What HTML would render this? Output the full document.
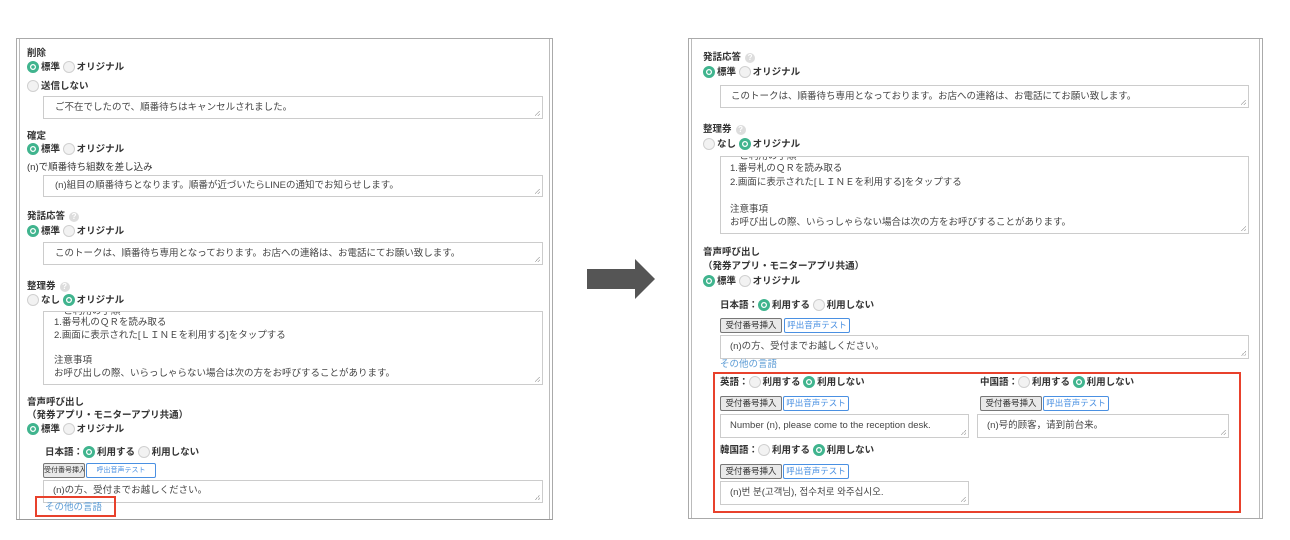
<!DOCTYPE html>
<html><head><meta charset="utf-8"><style>
body{margin:0;width:1290px;height:540px;background:#fff;position:relative;overflow:hidden;font-family:"Liberation Sans","Noto Sans CJK JP",sans-serif;color:#333}
.a{position:absolute}
.t{position:absolute;font-size:9.5px;line-height:12px;white-space:nowrap}
.b{font-weight:bold}
.r{display:inline-block;width:10px;height:10px;border-radius:50%;border:1px solid #d0d0d0;background:#f2f2f2;vertical-align:-3px;margin-right:2px}
.r.on{width:6px;height:6px;border:3px solid #40b48e;background:radial-gradient(circle,#40b48e 0 1.5px,#fff 2px)}
.ta{position:absolute;border:1px solid #ccc;background:#fff;overflow:hidden}
.ta:after{content:"";position:absolute;right:2px;bottom:2px;width:5px;height:5px;background:linear-gradient(135deg,transparent 45%,#aaa 45%,#aaa 55%,transparent 55%,transparent 75%,#aaa 75%,#aaa 85%,transparent 85%)}
.ta .t{color:#444}
.btn{position:absolute;font-size:8.5px;line-height:13px;height:13px;border:1px solid #777;border-radius:2px;background:#e9e9e9;color:#333;text-align:center;white-space:nowrap;overflow:hidden}
.sm{font-size:7px}
.btn2{border-color:#4a90e2;background:#fff;color:#4a90e2}
.q{display:inline-block;width:10px;height:10px;border-radius:50%;background:#ddd;color:#fff;font-size:8px;line-height:10px;text-align:center;vertical-align:0;margin-left:4px}
.link{color:#5b9bd5}
.red{position:absolute;border:2px solid #e8412c}
</style></head><body>
<div class="a" style="left:16px;top:38px;width:535px;height:480px;border:1px solid #aaa;border-bottom:1px solid #999"></div>
<div class="a" style="left:19px;top:39px;width:529px;height:480px;border-left:1px solid #bbb;border-right:1px solid #bbb"></div>

<div class="t b" style="left:27px;top:48px">削除</div>
<div class="t b" style="left:27px;top:61px"><span class="r on"></span>標準 <span class="r"></span>オリジナル</div>
<div class="t b" style="left:27px;top:80px"><span class="r"></span>送信しない</div>
<div class="ta" style="left:43px;top:96px;width:498px;height:21px"><div class="t" style="left:11px;top:5px">ご不在でしたので、順番待ちはキャンセルされました。</div></div>

<div class="t b" style="left:27px;top:131px">確定</div>
<div class="t b" style="left:27px;top:143px"><span class="r on"></span>標準 <span class="r"></span>オリジナル</div>
<div class="t" style="left:27px;top:162px">(n)で順番待ち組数を差し込み</div>
<div class="ta" style="left:43px;top:175px;width:498px;height:20px"><div class="t" style="left:11px;top:4px">(n)組目の順番待ちとなります。順番が近づいたらLINEの通知でお知らせします。</div></div>

<div class="t b" style="left:27px;top:211px">発話応答<span class="q">?</span></div>
<div class="t b" style="left:27px;top:225px"><span class="r on"></span>標準 <span class="r"></span>オリジナル</div>
<div class="ta" style="left:43px;top:242px;width:498px;height:21px"><div class="t" style="left:11px;top:5px">このトークは、順番待ち専用となっております。お店への連絡は、お電話にてお願い致します。</div></div>

<div class="t b" style="left:27px;top:281px">整理券<span class="q">?</span></div>
<div class="t b" style="left:27px;top:294px"><span class="r"></span>なし <span class="r on"></span>オリジナル</div>
<div class="ta" style="left:43px;top:311px;width:498px;height:72px">
<div class="t" style="left:10px;top:-6px">・ご利用の手順</div>
<div class="t" style="left:10px;top:5px">1.番号札のＱＲを読み取る</div>
<div class="t" style="left:10px;top:18px">2.画面に表示された[ＬＩＮＥを利用する]をタップする</div>
<div class="t" style="left:10px;top:43px">注意事項</div>
<div class="t" style="left:10px;top:56px">お呼び出しの際、いらっしゃらない場合は次の方をお呼びすることがあります。</div></div>

<div class="t b" style="left:27px;top:397px">音声呼び出し</div>
<div class="t b" style="left:27px;top:410px">（発券アプリ・モニターアプリ共通）</div>
<div class="t b" style="left:27px;top:423px"><span class="r on"></span>標準 <span class="r"></span>オリジナル</div>
<div class="t b" style="left:45px;top:446px">日本語：<span class="r on"></span>利用する <span class="r"></span>利用しない</div>
<div class="btn sm" style="left:43px;top:463px;width:40px">受付番号挿入</div>
<div class="btn btn2 sm" style="left:86px;top:463px;width:68px">呼出音声テスト</div>
<div class="ta" style="left:43px;top:480px;width:498px;height:21px"><div class="t" style="left:9px;top:4px">(n)の方、受付までお越しください。</div></div>
<div class="t link" style="left:45px;top:502px">その他の言語</div>
<div class="red" style="left:35px;top:496px;width:77px;height:17px"></div>

<div class="a" style="left:587px;top:269px;width:49px;height:20px;background:#555"></div>
<div class="a" style="left:635px;top:259px;width:0;height:0;border-top:20px solid transparent;border-bottom:20px solid transparent;border-left:20px solid #555"></div>

<div class="a" style="left:688px;top:38px;width:573px;height:479px;border:1px solid #aaa"></div>
<div class="a" style="left:691px;top:39px;width:567px;height:479px;border-left:1px solid #bbb;border-right:1px solid #bbb"></div>

<div class="t b" style="left:703px;top:52px">発話応答<span class="q">?</span></div>
<div class="t b" style="left:703px;top:66px"><span class="r on"></span>標準 <span class="r"></span>オリジナル</div>
<div class="ta" style="left:720px;top:85px;width:527px;height:21px"><div class="t" style="left:10px;top:5px">このトークは、順番待ち専用となっております。お店への連絡は、お電話にてお願い致します。</div></div>

<div class="t b" style="left:703px;top:124px">整理券<span class="q">?</span></div>
<div class="t b" style="left:703px;top:138px"><span class="r"></span>なし <span class="r on"></span>オリジナル</div>
<div class="ta" style="left:720px;top:156px;width:527px;height:76px">
<div class="t" style="left:9px;top:-6px">・ご利用の手順</div>
<div class="t" style="left:9px;top:6px">1.番号札のＱＲを読み取る</div>
<div class="t" style="left:9px;top:20px">2.画面に表示された[ＬＩＮＥを利用する]をタップする</div>
<div class="t" style="left:9px;top:47px">注意事項</div>
<div class="t" style="left:9px;top:60px">お呼び出しの際、いらっしゃらない場合は次の方をお呼びすることがあります。</div></div>

<div class="t b" style="left:703px;top:247px">音声呼び出し</div>
<div class="t b" style="left:703px;top:261px">（発券アプリ・モニターアプリ共通）</div>
<div class="t b" style="left:703px;top:275px"><span class="r on"></span>標準 <span class="r"></span>オリジナル</div>
<div class="t b" style="left:720px;top:299px">日本語：<span class="r on"></span>利用する <span class="r"></span>利用しない</div>
<div class="btn" style="left:720px;top:318px;width:60px">受付番号挿入</div>
<div class="btn btn2" style="left:784px;top:318px;width:64px">呼出音声テスト</div>
<div class="ta" style="left:720px;top:335px;width:527px;height:22px"><div class="t" style="left:9px;top:5px">(n)の方、受付までお越しください。</div></div>
<div class="t link" style="left:720px;top:359px">その他の言語</div>

<div class="red" style="left:713px;top:372px;width:524px;height:137px"></div>
<div class="t b" style="left:720px;top:376px">英語：<span class="r"></span>利用する <span class="r on"></span>利用しない</div>
<div class="btn" style="left:720px;top:396px;width:60px">受付番号挿入</div>
<div class="btn btn2" style="left:783px;top:396px;width:64px">呼出音声テスト</div>
<div class="ta" style="left:720px;top:414px;width:247px;height:22px"><div class="t" style="left:9px;top:5px">Number (n), please come to the reception desk.</div></div>
<div class="t b" style="left:720px;top:444px">韓国語：<span class="r"></span>利用する <span class="r on"></span>利用しない</div>
<div class="btn" style="left:720px;top:464px;width:60px">受付番号挿入</div>
<div class="btn btn2" style="left:783px;top:464px;width:64px">呼出音声テスト</div>
<div class="ta" style="left:720px;top:481px;width:247px;height:22px"><div class="t" style="left:9px;top:5px">(n)번 분(고객님), 접수처로 와주십시오.</div></div>

<div class="t b" style="left:980px;top:376px">中国語：<span class="r"></span>利用する <span class="r on"></span>利用しない</div>
<div class="btn" style="left:980px;top:396px;width:60px">受付番号挿入</div>
<div class="btn btn2" style="left:1043px;top:396px;width:64px">呼出音声テスト</div>
<div class="ta" style="left:977px;top:414px;width:250px;height:22px"><div class="t" style="left:9px;top:5px">(n)号的顾客，请到前台来。</div></div>
</body></html>
